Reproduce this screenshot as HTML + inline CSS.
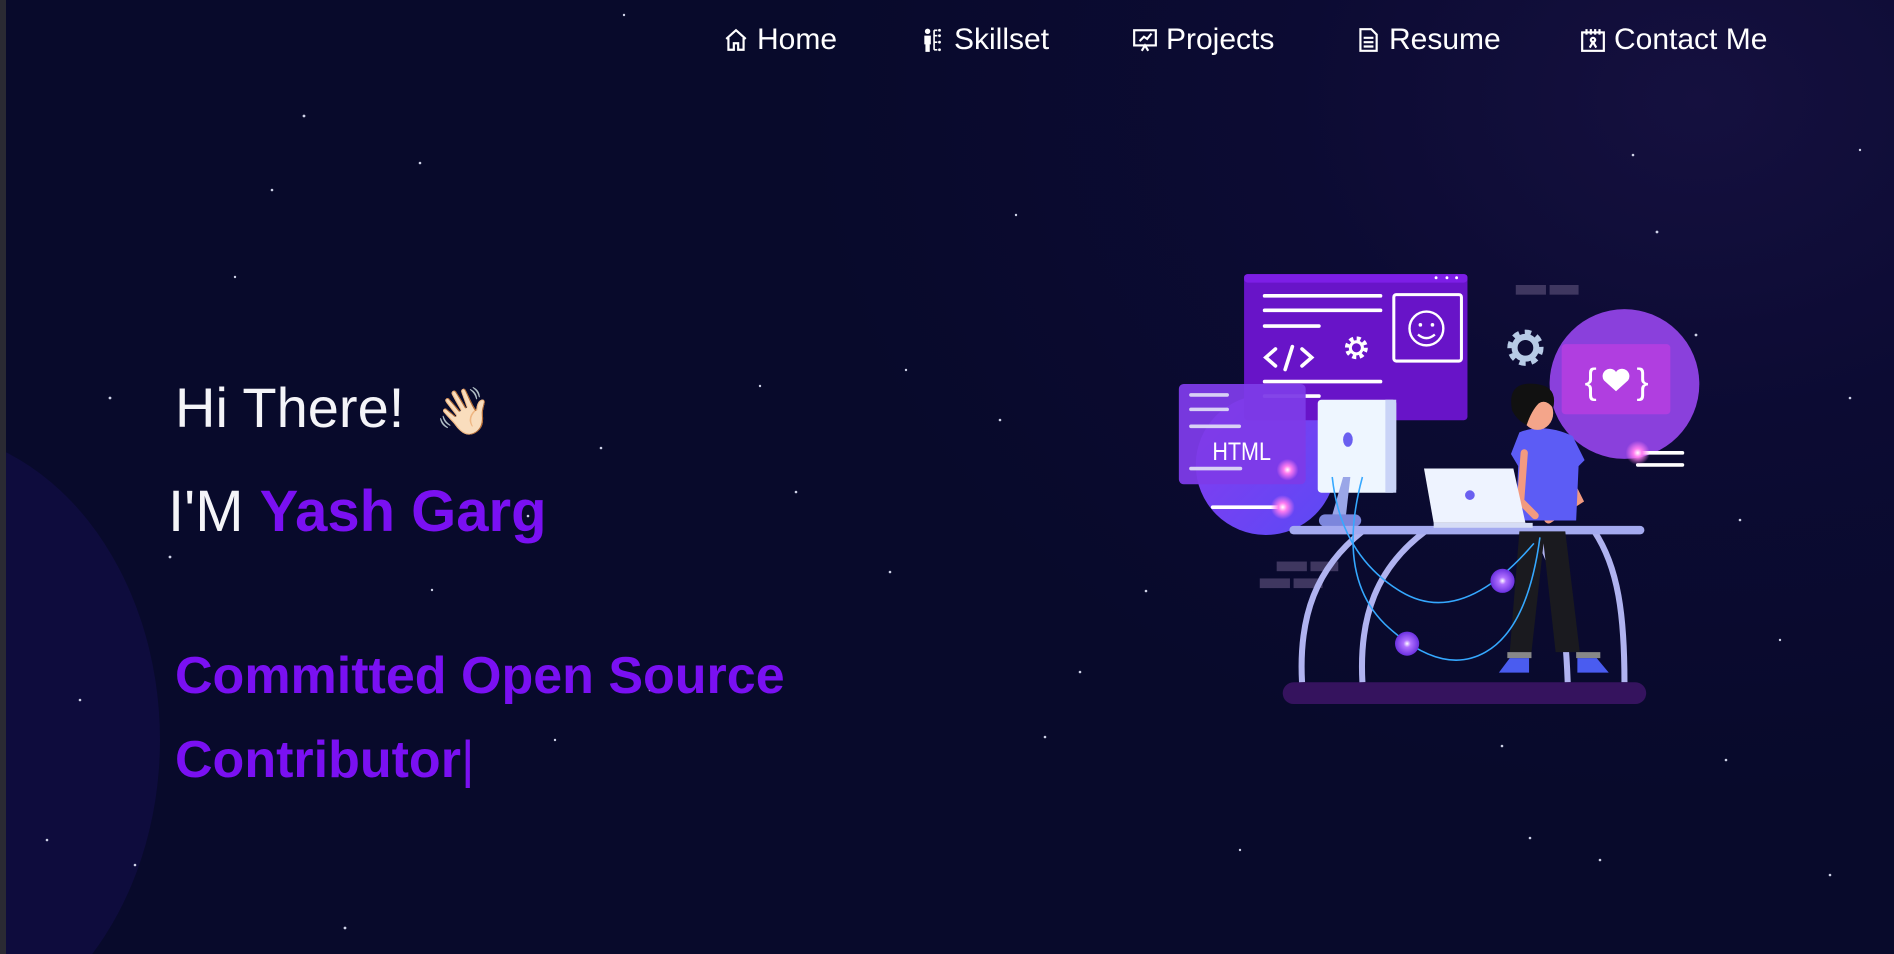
<!DOCTYPE html>
<html><head><meta charset="utf-8">
<style>
html,body{margin:0;padding:0;width:1894px;height:954px;overflow:hidden;}
body{background:radial-gradient(ellipse 900px 700px at 1700px 100px,#15103f 0%,#0c0b33 45%,#080a2b 100%);font-family:"Liberation Sans",sans-serif;position:relative;}
.wrap{position:absolute;left:0;top:0;width:1894px;height:954px;overflow:hidden;}
.edge{position:absolute;left:0;top:0;width:6px;height:954px;background:#2a2a33;}
.blob{position:absolute;left:-330px;top:430px;width:490px;height:620px;border-radius:50%;background:#0e0c3d;}
.nav{position:absolute;top:20px;height:40px;color:#fff;font-size:30px;display:flex;align-items:center;}
.nav svg{width:26px;height:26px;margin-right:8px;}
.t{position:absolute;white-space:nowrap;}
</style></head><body>
<div class="wrap">
<div class="blob"></div>
<div class="edge"></div>
<svg style="position:absolute;left:0;top:0" width="1894" height="954" viewBox="0 0 1894 954">
<g fill="#cfd3e8">
<circle cx="304" cy="116" r="1.4"/><circle cx="420" cy="163" r="1.3"/><circle cx="272" cy="190" r="1.3"/><circle cx="110" cy="398" r="1.4"/><circle cx="170" cy="557" r="1.4"/><circle cx="528" cy="516" r="1.3"/><circle cx="601" cy="448" r="1.3"/><circle cx="650" cy="690" r="1.3"/><circle cx="796" cy="492" r="1.3"/><circle cx="890" cy="572" r="1.3"/><circle cx="1080" cy="672" r="1.3"/><circle cx="1146" cy="591" r="1.3"/><circle cx="1045" cy="737" r="1.3"/><circle cx="1502" cy="746" r="1.3"/><circle cx="1657" cy="232" r="1.4"/><circle cx="1633" cy="155" r="1.3"/><circle cx="1696" cy="335" r="1.4"/><circle cx="1740" cy="520" r="1.3"/><circle cx="1850" cy="398" r="1.3"/><circle cx="1726" cy="760" r="1.3"/><circle cx="1530" cy="838" r="1.3"/><circle cx="1830" cy="875" r="1.3"/><circle cx="345" cy="928" r="1.4"/><circle cx="80" cy="700" r="1.3"/><circle cx="47" cy="840" r="1.3"/><circle cx="135" cy="865" r="1.3"/><circle cx="1000" cy="420" r="1.3"/><circle cx="235" cy="277" r="1.2"/><circle cx="1600" cy="860" r="1.3"/><circle cx="1240" cy="850" r="1.2"/><circle cx="624" cy="15" r="1.2"/><circle cx="906" cy="370" r="1.2"/><circle cx="760" cy="386" r="1.2"/><circle cx="1016" cy="215" r="1.2"/><circle cx="1860" cy="150" r="1.2"/><circle cx="1780" cy="640" r="1.2"/><circle cx="555" cy="740" r="1.2"/><circle cx="432" cy="590" r="1.2"/>
</g>
</svg>

<div class="nav" style="left:723px"><svg viewBox="0 0 24 24" fill="none" stroke="#fff" stroke-width="2"><path d="M3 11L12 3l9 8M5 10v11h5v-6h4v6h5V10"/></svg>Home</div>
<div class="nav" style="left:920px"><svg viewBox="0 0 24 24" fill="#fff"><circle cx="7" cy="4" r="2.5"/><path d="M4 8h6v8H9v7H5v-7H4z"/><path d="M13 3h3M13 3v18M13 8h3M13 14h3M13 21h3" stroke="#fff" stroke-width="1.5" fill="none"/><circle cx="18" cy="3" r="1.3"/><circle cx="18" cy="8" r="1.3"/><circle cx="18" cy="14" r="1.3"/><circle cx="18" cy="21" r="1.3"/></svg>Skillset</div>
<div class="nav" style="left:1132px"><svg viewBox="0 0 24 24" fill="none" stroke="#fff" stroke-width="2"><rect x="2" y="3" width="20" height="14"/><path d="M7 13l4-4 3 2 4-5M9 22l3-5 3 5"/></svg>Projects</div>
<div class="nav" style="left:1355px"><svg viewBox="0 0 24 24" fill="none" stroke="#fff" stroke-width="2"><path d="M5 2h10l5 5v15H5z"/><path d="M8 10h9M8 14h9M8 18h9"/></svg>Resume</div>
<div class="nav" style="left:1580px"><svg viewBox="0 0 24 24" fill="none" stroke="#fff" stroke-width="2"><rect x="2" y="5" width="20" height="17"/><path d="M6 2v5M10 2v5M14 2v5M18 2v5"/><circle cx="12" cy="12" r="2"/><path d="M9 19l3-5 3 5"/></svg>Contact Me</div>

<div class="t" style="left:175px;top:375px;font-size:56px;color:#f4f4f8;">Hi There!&nbsp; <span style="font-size:46px;font-family:'Noto Color Emoji','DejaVu Sans',sans-serif">👋🏻</span></div>
<div class="t" style="left:168px;top:478px;font-size:58px;color:#f4f4f8;">I'M <span style="color:#7a10f2;font-weight:600">Yash Garg</span></div>
<div class="t" style="left:175px;top:646px;font-size:52px;color:#7a10f2;font-weight:600;">Committed Open Source</div>
<div class="t" style="left:175px;top:730px;font-size:52px;color:#7a10f2;font-weight:600;">Contributor<span style="font-weight:normal">|</span></div>

<svg style="position:absolute;left:0;top:0" width="1894" height="954" viewBox="0 0 1568 790">
<defs>
<radialGradient id="glow"><stop offset="0" stop-color="#fff"/><stop offset=".35" stop-color="#ff7cf0"/><stop offset="1" stop-color="#ff7cf0" stop-opacity="0"/></radialGradient>
<radialGradient id="orb"><stop offset="0" stop-color="#fff"/><stop offset=".3" stop-color="#b070ff"/><stop offset="1" stop-color="#6a30e0"/></radialGradient>
<linearGradient id="c1" x1="0" y1="0" x2="1" y2="1"><stop offset="0" stop-color="#8a3af0"/><stop offset="1" stop-color="#5a4af5"/></linearGradient>
</defs>
<rect x="1255" y="236" width="25" height="8" fill="#3f3760"/><rect x="1283" y="236" width="24" height="8" fill="#3f3760"/>
<rect x="1057" y="465" width="25" height="8" fill="#3f3760"/><rect x="1085" y="465" width="23" height="8" fill="#3f3760"/>
<rect x="1043" y="479" width="25" height="8" fill="#3f3760"/><rect x="1071" y="479" width="24" height="8" fill="#3f3760"/>
<circle cx="1048" cy="385" r="58" fill="url(#c1)"/>
<rect x="1030" y="227" width="185" height="121" rx="3" fill="#6814c8"/>
<rect x="1030" y="227" width="185" height="7" rx="3" fill="#7d1ee6"/>
<g fill="#fff"><circle cx="1189" cy="230" r="1.2"/><circle cx="1198" cy="230" r="1.2"/><circle cx="1206" cy="230" r="1.2"/></g>
<g stroke="#fff" stroke-width="3" stroke-linecap="round"><path d="M1047 245h96M1047 257h96M1047 270h45M1047 316h96M1047 328h45"/></g>
<path d="M1056 289l-8 7 8 7M1078 289l8 7-8 7M1070 287l-6 19" stroke="#fff" stroke-width="3" fill="none" stroke-linecap="round"/>
<circle cx="1123" cy="288" r="7" fill="none" stroke="#fff" stroke-width="5" stroke-dasharray="3 2.5"/><circle cx="1123" cy="288" r="5" fill="none" stroke="#fff" stroke-width="2.5"/>
<rect x="1154" y="244" width="56" height="55" rx="2" fill="none" stroke="#fff" stroke-width="2.5"/>
<circle cx="1181" cy="272" r="14" fill="none" stroke="#fff" stroke-width="2"/><circle cx="1176" cy="269" r="1.5" fill="#fff"/><circle cx="1186" cy="269" r="1.5" fill="#fff"/><path d="M1174 277q7 6 14 0" stroke="#fff" stroke-width="2" fill="none"/>
<rect x="976" y="318" width="105" height="83" rx="4" fill="#7d3be8" opacity=".95"/>
<g stroke="#d8d0f5" stroke-width="3" stroke-linecap="round"><path d="M986 327h30M986 339h30M986 353h40M986 388h30M1002 388h25"/></g>
<text x="1028" y="381" font-family="Liberation Sans Narrow,Liberation Sans,sans-serif" font-size="21" fill="#fff" text-anchor="middle" transform="translate(1028 0) scale(.85 1) translate(-1028 0)">HTML</text>
<circle cx="1066" cy="389" r="9" fill="url(#glow)"/>
<path d="M1004 420h58" stroke="#fff" stroke-width="3" stroke-linecap="round"/><circle cx="1062" cy="420" r="10" fill="url(#glow)"/>
<circle cx="1345" cy="318" r="62" fill="#8a40dc"/>
<rect x="1293" y="285" width="90" height="58" rx="3" fill="#b03ee0"/>
<text x="1317" y="326" font-family="Liberation Sans,sans-serif" font-size="30" fill="#fff" text-anchor="middle">{</text>
<text x="1360" y="326" font-family="Liberation Sans,sans-serif" font-size="30" fill="#fff" text-anchor="middle">}</text>
<path d="M1338 324l-10-9a5.5 5.5 0 0 1 10-7a5.5 5.5 0 0 1 10 7z" fill="#fff"/>
<path d="M1356 375h37M1356 385h37" stroke="#fff" stroke-width="3" stroke-linecap="round"/><circle cx="1356" cy="375" r="10" fill="url(#glow)"/>
<circle cx="1263" cy="288" r="11" fill="none" stroke="#b7cbe6" stroke-width="8" stroke-dasharray="4.5 4"/><circle cx="1263" cy="288" r="9" fill="none" stroke="#b7cbe6" stroke-width="5"/>
<g fill="none" stroke="#b0b3f0" stroke-width="5"><path d="M1078 565C1075 510 1090 470 1128 440"/><path d="M1128 565C1125 510 1140 470 1180 440"/><path d="M1298 565C1296 510 1290 470 1270 440"/><path d="M1345 565C1345 510 1340 470 1320 440"/></g>
<rect x="1091" y="331" width="65" height="77" rx="3" fill="#eef6ff"/><rect x="1147" y="331" width="9" height="77" fill="#c9d3f7"/>
<ellipse cx="1116" cy="364" rx="4" ry="6" fill="#6a5ff0"/>
<path d="M1112 395l-10 35h12l4-35z" fill="#9aa6e8"/><rect x="1092" y="426" width="35" height="10" rx="5" fill="#7c86dc"/>
<path d="M1071 439h287" stroke="#a4aaf0" stroke-width="7" stroke-linecap="round"/>
<path d="M1258 440l-8 100h18l10-90 10 90h20l-12-100z" fill="#1a1a1f"/>
<path d="M1248 540h20v5h-20zM1305 540h20v5h-20z" fill="#888"/>
<path d="M1250 545h16v12h-25zM1306 545h16l10 12h-26z" fill="#4a5cf0"/>
<path d="M1295 390l12 24-25 16" stroke="#f29a7f" stroke-width="7" fill="none" stroke-linecap="round"/>
<path d="M1258 358q20-8 44 3l10 20-5 5-2 45h-50l2-45-6-10z" fill="#5c5cf5"/>
<path d="M1262 375l-3 40 12 12" stroke="#f29a7f" stroke-width="6" fill="none" stroke-linecap="round"/>
<ellipse cx="1273" cy="342" rx="13" ry="14" fill="#f4a58a"/>
<path d="M1252 340q-5-25 20-22q18 2 14 20q-6-8-12-4q-6 6-10 18q-8-4-12-12z" fill="#111"/>
<path d="M1179 388h74l10 45h-76z" fill="#eef3ff"/><path d="M1187 433h82v4h-82z" fill="#d6dcf5"/><ellipse cx="1217" cy="410" rx="4" ry="4" fill="#6a5ff0"/>
<g fill="none" stroke="#35a8ff" stroke-width="1.3"><path d="M1103 395Q1110 460 1160 490T1270 450"/><path d="M1128 395Q1105 480 1150 520T1230 540 1275 445"/></g>
<circle cx="1244" cy="481" r="10" fill="url(#orb)"/><circle cx="1165" cy="533" r="10" fill="url(#orb)"/>
<rect x="1062" y="565" width="301" height="18" rx="9" fill="#35135e"/>
</svg>
</div>
</body></html>
